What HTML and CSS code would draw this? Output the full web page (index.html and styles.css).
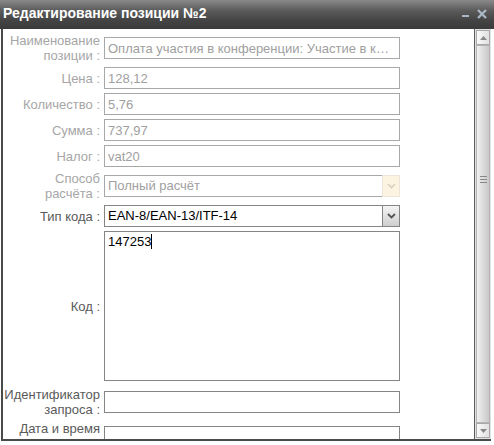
FILE: index.html
```
<html>
<head>
    <meta charset="utf-8">
    <link rel="stylesheet" href="styles.css">
</head>
<body>
    <div class="window">
        <div class="titlebar">
            <span class="title">Редактирование позиции №2</span>
            <svg class="tools" width="40" height="29" viewBox="0 0 40 29">
                <rect x="8" y="15" width="7" height="2" fill="#a9b6c3"/>
                <path d="M24 10 L32 18 M32 10 L24 18" stroke="#a9b6c3" stroke-width="2.4"/>
            </svg>
        </div>
        <div class="content">
            <div class="form">
                <label class="off">Наименование позиции :</label>
                <input class="field" type="text" disabled value="Оплата участия в конференции: Участие в конференции"/>

                <label class="off">Цена :</label>
                <input class="field" type="text" disabled value="128,12"/>

                <label class="off">Количество :</label>
                <input class="field" type="text" disabled value="5,76"/>

                <label class="off">Сумма :</label>
                <input class="field" type="text" disabled value="737,97"/>

                <label class="off">Налог :</label>
                <input class="field" type="text" disabled value="vat20"/>

                <label class="off">Способ<br>расчёта :</label>
                <div class="select disabled">
                    <span class="value">Полный расчёт</span>
                    <span class="arrow">
                        <svg width="9" height="6" viewBox="0 0 9 6"><path d="M1 1 L4.5 4.5 L8 1" fill="none" stroke="#d8cfc0" stroke-width="1.6"/></svg>
                    </span>
                </div>

                <label>Тип кода :</label>
                <div class="select">
                    <span class="value">EAN-8/EAN-13/ITF-14</span>
                    <span class="arrow">
                        <svg width="9" height="6" viewBox="0 0 9 6"><path d="M1 1 L4.5 4.5 L8 1" fill="none" stroke="#555" stroke-width="1.8"/></svg>
                    </span>
                </div>

                <label>Код :</label>
                <div class="code">147253<span class="caret"></span></div>

                <label class="shift">Идентификатор<br>запроса :</label>
                <input class="field on shift" type="text" value=""/>

                <label class="top">Дата и время</label>
                <input class="field on top-field" type="text" value=""/>
            </div>
            <div class="scrollbar">
                <div class="btn">
                    <svg width="7" height="4" viewBox="0 0 7 4"><path d="M0 4 L3.5 0 L7 4 Z" fill="#888"/></svg>
                </div>
                <div class="thumb">
                    <div class="grip"></div>
                </div>
                <div class="btn">
                    <svg width="7" height="4" viewBox="0 0 7 4"><path d="M0 0 L3.5 4 L7 0 Z" fill="#888"/></svg>
                </div>
            </div>
        </div>
    </div>
</body>
</html>
```
FILE: styles.css
```
body {
    margin: 0;
    background: #fff;
    font-family: "Liberation Sans", Arial, sans-serif;
    font-size: 13px;
}

.window {
    width: 494px;
}

.titlebar {
    height: 29px;
    display: flex;
    justify-content: space-between;
    background: linear-gradient(#8a8a8a, #5c5c5c 35%, #444 70%, #3a3a3a);
}

.title {
    color: #fff;
    font-weight: bold;
    font-size: 14px;
    line-height: 16px;
    padding: 5px 0 0 3px;
}

.content {
    display: flex;
    width: 488px;
    height: 410px;
    margin-left: 1px;
    border-left: 2px solid #4a4a4a;
    border-bottom: 2px solid #4a4a4a;
    overflow: hidden;
}

.form {
    flex: 1;
    display: grid;
    grid-template-columns: 97px 296px;
    grid-auto-rows: min-content;
    column-gap: 4px;
    row-gap: 4px;
    align-items: center;
    padding-top: 4px;
}

.form label {
    text-align: right;
    line-height: 15px;
    color: #5a5a5a;
}

.form label.off {
    color: #a6a6a6;
}

.form .shift {
    margin-top: 2px;
}

.form .top {
    align-self: start;
}

.form .top-field {
    align-self: start;
    margin-top: 5px;
}

.field {
    box-sizing: border-box;
    width: 296px;
    height: 22px;
    margin: 0;
    padding: 0 3px;
    border: 1px solid #a8a8a8;
    font-family: inherit;
    font-size: 13px;
    color: #a0a0a0;
    background: #fff;
    text-overflow: ellipsis;
    outline: none;
}

.field.on {
    border-color: #858585;
    color: #000;
}

.select {
    display: flex;
    height: 22px;
}

.select .value {
    flex: 1;
    border: 1px solid #858585;
    border-right: none;
    padding: 0 3px;
    line-height: 20px;
    color: #000;
}

.select .arrow {
    width: 16px;
    display: flex;
    align-items: center;
    justify-content: center;
    border: 1px solid #858585;
    background: linear-gradient(#f4f4f4, #cfcfcf);
}

.select.disabled .value {
    border-color: #a8a8a8;
    color: #a0a0a0;
}

.select.disabled .arrow {
    border-color: #ece6da;
    background: #fdf3e1;
}

.code {
    box-sizing: border-box;
    width: 296px;
    height: 150px;
    border: 1px solid #858585;
    padding: 2px 3px;
    line-height: 16px;
    color: #000;
}

.caret {
    display: inline-block;
    width: 1px;
    height: 15px;
    background: #000;
    vertical-align: -3px;
}

.scrollbar {
    width: 16px;
    border-left: 1px solid #5a5a5a;
    display: flex;
    flex-direction: column;
    padding: 1px 0;
    background: #e2e2e2;
}

.btn {
    box-sizing: border-box;
    height: 15px;
    margin: 0 1px;
    border: 1px solid #a9a9a9;
    background: linear-gradient(90deg, #fafafa, #e0e0e0);
    display: flex;
    align-items: center;
    justify-content: center;
}

.thumb {
    flex: 1;
    margin: 0 1px;
    border: 1px solid #b4b4b4;
    background: linear-gradient(90deg, #f0f0f0, #dcdcdc 50%, #c8c8c8);
    display: flex;
    align-items: center;
    justify-content: center;
}

.grip {
    width: 7px;
    height: 7px;
    background: repeating-linear-gradient(#888 0, #888 1px, transparent 1px, transparent 3px);
    margin-top: -110px;
}
```
